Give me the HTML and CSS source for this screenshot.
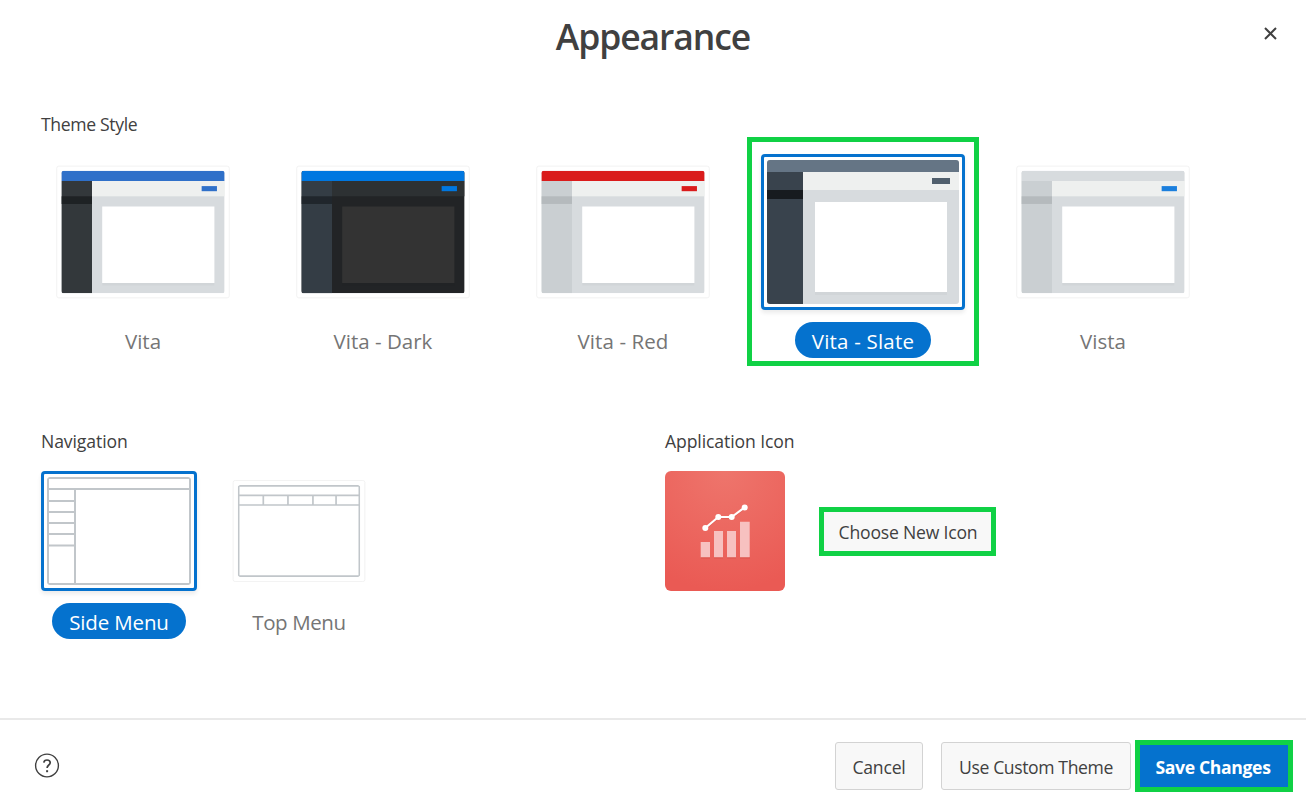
FILE: index.html
```html
<!DOCTYPE html>
<html lang="en">
<head>
<meta charset="utf-8">
<title>Appearance</title>
<link rel="stylesheet" href="styles.css">
</head>
<body>
<div class="dialog">
  <header class="header">
    <h1 class="title">Appearance</h1>
    <button class="close" aria-label="Close"><svg width="14" height="14" viewBox="0 0 14 14"><path d="M1 1 12 12M12 1 1 12" stroke="#404040" stroke-width="2" fill="none"/></svg></button>
  </header>
  <main class="body">
    <section class="themes">
      <h2 class="label t-style">Theme Style</h2>
      <div class="theme-row">
        <div class="option vita"><div class="thumb"><svg class="preview" viewBox="0 0 192 144"><use href="#theme"/></svg></div><span class="name">Vita</span></div>
        <div class="option dark"><div class="thumb"><svg class="preview" viewBox="0 0 192 144"><use href="#theme"/></svg></div><span class="name">Vita - Dark</span></div>
        <div class="option red"><div class="thumb"><svg class="preview" viewBox="0 0 192 144"><use href="#theme"/></svg></div><span class="name t-red">Vita - Red</span></div>
        <div class="option slate selected"><div class="thumb"><svg class="preview" viewBox="0 0 192 144"><use href="#theme"/></svg></div><span class="name t-slate">Vita - Slate</span></div>
        <div class="option vista"><div class="thumb"><svg class="preview" viewBox="0 0 192 144"><use href="#theme"/></svg></div><span class="name">Vista</span></div>
      </div>
    </section>
    <div class="lower">
      <section class="navigation">
        <h2 class="label">Navigation</h2>
        <div class="nav-row">
          <div class="option small selected"><div class="thumb"><svg class="preview wire" viewBox="0 0 144 108"><rect x="1" y="1" width="142" height="106" rx="1"/><path d="M1 12H143M28 12V107M1 24H28M1 35H28M1 46H28M1 57H28M1 68.4H28"/></svg></div><span class="name t-side">Side Menu</span></div>
          <div class="option small"><div class="thumb"><svg class="preview wire" viewBox="0 0 144 108"><rect x="1" y="1" width="142" height="106" rx="1"/><path d="M1 12H143M1 23.4H143M30 12V23.4M59 12V23.4M88.4 12V23.4M115.6 12V23.4"/></svg></div><span class="name t-top">Top Menu</span></div>
        </div>
      </section>
      <section class="app-icon">
        <h2 class="label">Application Icon</h2>
        <div class="icon-row">
          <svg class="icon" viewBox="0 0 120 120">
            <defs><radialGradient id="coral" cx=".5" cy="0" r="1"><stop offset="0" stop-color="#ee756c"/><stop offset="1" stop-color="#ea5a54"/></radialGradient></defs>
            <rect width="120" height="120" rx="6" fill="url(#coral)"/>
            <g fill="#c9443e" opacity=".45"><path d="M36 86h9v1.5h-9zM49 86h9v1.5h-9zM62 86h9v1.5h-9zM75 86h10v1.5H75z"/></g>
            <g transform="translate(0 1)" stroke="#c9443e" stroke-width="2" opacity=".35" fill="none"><path d="M40.3 57 53.3 45.7H66.7L79.7 36.3"/></g>
            <path d="M35.7 71H45V86.3H35.7zM49 60H58V86.3H49zM62 60H71V86.3H62zM75 50.7H84.7V86.3H75z" fill="#f7c1c0"/>
            <path d="M40.3 57 53.3 46H66.7L79.7 36.3" fill="none" stroke="#fff" stroke-width="2.1"/>
            <g fill="#fff"><circle cx="40.3" cy="57" r="3"/><circle cx="53.3" cy="46" r="3"/><circle cx="66.7" cy="46" r="3"/><circle cx="79.7" cy="36.5" r="3"/></g>
          </svg>
          <button class="choose">Choose New Icon</button>
        </div>
      </section>
    </div>
  </main>
  <footer class="footer">
    <svg class="help" width="26" height="26" viewBox="0 0 26 26" fill="none" stroke="#404040"><circle cx="13" cy="12.5" r="11.4" stroke-width="1.4"/><path d="M9.8 9.7C10 7.9 11.3 7 13 7c1.8 0 3.2 1 3.2 2.7 0 2.4-3.1 2.3-3.1 5.3" stroke-width="1.7"/><path d="M13.1 17.2v2" stroke-width="2"/></svg>
    <div class="actions">
      <button class="btn cancel">Cancel</button>
      <button class="btn custom">Use Custom Theme</button>
      <button class="btn save">Save Changes</button>
    </div>
  </footer>
</div>
<svg width="0" height="0" class="defs">
  <symbol id="theme" viewBox="0 0 192 144">
    <rect width="192" height="144" fill="var(--page)"/>
    <rect width="192" height="12" fill="var(--head)"/>
    <rect x="36" y="12" width="156" height="18" fill="var(--bar)"/>
    <rect y="12" width="36" height="132" fill="var(--side)"/>
    <rect y="30" width="36" height="9" fill="var(--active)"/>
    <rect x="165" y="18" width="18" height="6" fill="var(--button)"/>
    <rect x="48" y="132" width="132" height="3" fill="#000" opacity=".025"/>
    <rect x="48" y="42" width="132" height="90" fill="var(--card)"/>
  </symbol>
</svg>
</body>
</html>
```
FILE: styles.css
```css
*, *::after { box-sizing: border-box; }
body { margin: 0; background: #fff; color: #404040; font-family: "Open Sans", "Noto Sans", sans-serif; overflow: hidden; }
button { font: inherit; color: inherit; margin: 0; padding: 0; }
h1, h2 { margin: 0; }
.defs { position: absolute; }
.dialog { width: 1306px; height: 807px; display: flex; flex-direction: column; }
.header { height: 112px; display: grid; grid-template-columns: 71px 1fr 71px; align-items: start; }
.title { grid-column: 2; text-align: center; font-size: 35.5px; font-weight: 600; line-height: 48px; padding-top: 12px; letter-spacing: -1.1px; }
.close { border: 0; background: none; width: 14px; height: 14px; margin: 27px 0 0 29px; }
.close svg { display: block; }
.body { flex: 1; }
.label { font-size: 17.6px; font-weight: 400; line-height: 24px; padding-bottom: 2px; letter-spacing: -0.1px; white-space: nowrap; }
.t-style { letter-spacing: -0.35px; }
.themes .label { margin-left: 41px; }
.theme-row { display: flex; padding-left: 41px; gap: 36px; margin-top: 16px; }
.option { position: relative; width: 204px; display: flex; flex-direction: column; align-items: center; }
.thumb { width: 204px; height: 156px; border: 1px solid #f0f0f0; padding: 5px; border-radius: 3px; transform: scale(.85); }
.selected .thumb { border: 3px solid #0572ce; padding: 3px; border-radius: 4px; transform: none; box-shadow: 0 3px 4px rgba(0, 0, 0, .08); }
.preview { display: block; width: 192px; height: 144px; border-radius: 3px; }
.name { height: 36px; margin-top: 12px; border-radius: 18px; font-size: 20.5px; line-height: 39px; color: #757575; text-align: center; white-space: nowrap; }
.t-red { letter-spacing: .1px; }
.t-slate { width: 136px; letter-spacing: .2px; }
.t-side { width: 134px; letter-spacing: -.15px; }
.t-top { letter-spacing: -.4px; }
.selected .name { background: #0572ce; color: #fff; }
.slate::after { content: ""; position: absolute; left: -14px; top: -17px; width: 232px; height: 229px; border: 5px solid #10d145; }
.vita { --page: #d7dbde; --head: #2f70c9; --bar: #eef0ef; --side: #33383b; --active: #1e2224; --button: #2f70c9; --card: #fff; }
.dark { --page: #222426; --head: #0077e0; --bar: #2d3133; --side: #343d45; --active: #20262c; --button: #0077e0; --card: #333; }
.red { --page: #d7dbde; --head: #da1b1b; --bar: #eef0ef; --side: #cacfd2; --active: #b5babd; --button: #da1b1b; --card: #fff; }
.slate { --page: #d7dbde; --head: #657585; --bar: #eef0ef; --side: #39434d; --active: #171b1f; --button: #505f6d; --card: #fff; }
.vista { --page: #d7dbde; --head: #d7dbde; --bar: #eef0ef; --side: #cacfd2; --active: #b5babd; --button: #1b7fdd; --card: #fff; }
.lower { display: grid; grid-template-columns: 624px 1fr; padding-left: 41px; margin-top: 71px; }
.nav-row { display: flex; gap: 24px; margin-top: 16px; }
.small { width: 156px; }
.small .thumb { width: 156px; height: 120px; }
.small .preview { width: 144px; height: 108px; }
.wire { fill: none; stroke: #c1c6ca; stroke-width: 2; }
.icon-row { display: flex; align-items: center; gap: 34px; margin-top: 16px; }
.icon { width: 120px; height: 120px; }
.choose { width: 177px; height: 49px; padding: 1px 0 0 1px; border: 5px solid #10d145; background: #f8f8f8; font-size: 17.6px; letter-spacing: -0.2px; white-space: nowrap; }
.footer { height: 89px; border-top: 2px solid #e9e9e9; padding: 20px 13px 0 34px; display: flex; justify-content: space-between; align-items: flex-start; }
.help { margin-top: 13px; }
.actions { display: flex; align-items: center; }
.btn { height: 48px; border: 1px solid #d3d3d3; border-radius: 3px; background: #f8f8f8; font-size: 17.6px; letter-spacing: -0.2px; padding-top: 1px; white-space: nowrap; }
.cancel { width: 88px; margin-right: 18px; }
.custom { width: 190px; margin-right: 4px; letter-spacing: -0.4px; }
.save { width: 158px; height: 52px; padding-right: 2px; border: 5px solid #10d145; border-radius: 0; background: #0572ce; color: #fff; font-weight: 700; letter-spacing: -0.35px; }
```
